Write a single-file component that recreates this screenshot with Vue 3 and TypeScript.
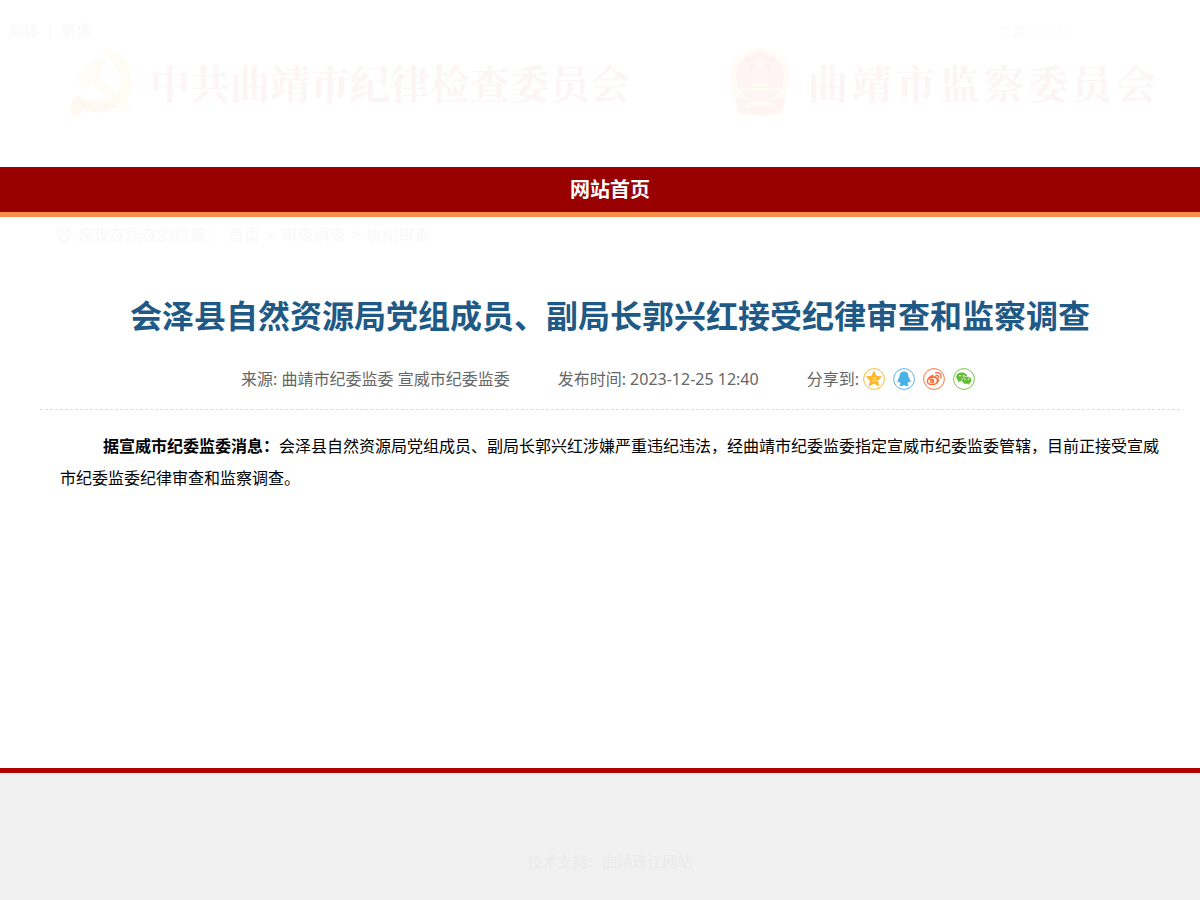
<script setup lang="ts">
const languages = ['简体', '繁体']
const crumbs = ['首页', '审查调查', '执纪审查']
</script>

<template>
  <div class="page">
    <header class="header">
      <div class="tools">
        <nav class="lang">
          <template v-for="(name, i) in languages" :key="name">
            <span v-if="i" class="bar">|</span>
            <a href="#">{{ name }}</a>
          </template>
        </nav>
        <form class="search" @submit.prevent>
          <input type="text" aria-label="站内搜索" placeholder="主题词搜索" />
        </form>
      </div>
      <div class="brands">
        <div class="brand">
          <svg class="emblem" viewBox="0 0 64 70" aria-hidden="true">
            <g fill="#fffcf5">
              <path d="M27 1Q60 3 62 34Q62 47 55 54L60 60L54 66L47 60Q33 69 14 63L7 69L0 66L2 52L9 48Q24 58 39 52L23 37L15 43L5 33L24 13H38L31 22L29 31L46 46Q58 22 27 1Z" />
            </g>
            <path d="M2 53L9 49Q24 61 44 55L47 60Q33 69 14 63L7 69L0 66Z" fill="#fef8f2" />
          </svg>
          <span class="name party">中共曲靖市纪律检查委员会</span>
        </div>
        <div class="brand">
          <svg class="emblem" viewBox="0 0 64 70" aria-hidden="true">
            <circle cx="32" cy="31" r="30" fill="#fffbf5" />
            <circle cx="32" cy="30" r="24" fill="#fef4f3" />
            <path d="M7 49Q32 60 57 49L54 66Q32 71 10 66Z" fill="#fef5f3" />
            <path d="M13 41H51V44H13ZM22 36H42V40H22ZM25 32H39V35H25ZM15 58Q32 50 49 58L46 62Q32 55 18 62Z" fill="#fffaf3" />
            <path d="M32 10l2 5h5l-4 3 2 5-5-3-5 3 2-5-4-3h5z" fill="#fffaf3" />
            <g fill="#fffaf3"><circle cx="19" cy="24" r="2" /><circle cx="24" cy="28" r="2" /><circle cx="40" cy="28" r="2" /><circle cx="45" cy="24" r="2" /></g>
          </svg>
          <span class="name commission">曲靖市监察委员会</span>
        </div>
      </div>
    </header>

    <nav class="nav"><a href="#">网站首页</a></nav>

    <main class="main">
      <nav class="crumbs">
        <svg viewBox="0 0 16 16" aria-hidden="true"><path d="M8 15Q2 10 2 6A6 5 0 0 1 14 6Q14 10 8 15Z" fill="none" stroke="#f9f9f9" stroke-width="2" /><circle cx="8" cy="6" r="2" fill="#f9f9f9" /></svg>
        <span>您现在所在的位置：</span>
        <template v-for="(c, i) in crumbs" :key="c">
          <span v-if="i">&gt;</span>
          <a href="#">{{ c }}</a>
        </template>
      </nav>

      <article>
        <h1>会泽县自然资源局党组成员、副局长郭兴红接受纪律审查和监察调查</h1>
        <div class="meta">
          <span>来源: 曲靖市纪委监委 宣威市纪委监委</span>
          <span>发布时间: 2023-12-25 12:40</span>
          <div class="share">
            <span>分享到:</span>
            <a href="#" aria-label="QQ空间">
              <svg viewBox="0 0 22 22"><circle cx="11" cy="11" r="10.4" fill="#fff" stroke="#f5be3f" /><path d="M11 3.5l2.2 4.8 5.2.6-3.8 3.6 1 5.2-4.6-2.6-4.6 2.6 1-5.2-3.8-3.6 5.2-.6z" fill="#fdb52a" stroke="#fdb52a" stroke-linejoin="round" /><path d="M8.4 9.8h4.8L9.6 13q3 .5 5.4-.2" fill="none" stroke="#ffe3a0" stroke-width=".8" /></svg>
            </a>
            <a href="#" aria-label="QQ好友">
              <svg viewBox="0 0 22 22"><circle cx="11" cy="11" r="10.4" fill="#fff" stroke="#56b6e7" /><path d="M11 3.6C7.8 3.6 6.4 6 6.5 9Q4.6 11.4 4.4 13.4Q4.4 15 6.2 13.6Q6.7 14.8 7.6 15.7Q5.7 16.7 7 17.7Q9.3 18.3 11 17.2Q12.7 18.3 15 17.7Q16.3 16.7 14.4 15.7Q15.3 14.8 15.8 13.6Q17.6 15 17.6 13.4Q17.4 11.4 15.5 9C15.6 6 14.2 3.6 11 3.6Z" fill="#49b1e6" /></svg>
            </a>
            <a href="#" aria-label="新浪微博">
              <svg viewBox="0 0 22 22"><circle cx="11" cy="11" r="10.4" fill="#fff" stroke="#ff763b" /><path d="M9.4 6.8Q11 6.6 10.7 8.5Q14 7.3 13.9 9.8Q16.9 10.9 15.8 13.4Q13.8 17.2 9.3 17.2Q3.8 16.8 3.6 13.4Q4.2 9.1 9.4 6.8Z" fill="#ff6a32" /><ellipse cx="9.4" cy="13" rx="4.4" ry="2.9" fill="#fff" transform="rotate(-8 9.4 13)" /><circle cx="9" cy="13.1" r="2.3" fill="#ff6a32" /><circle cx="8.4" cy="13.5" r=".7" fill="#fff" /><path d="M12.6 4.8Q18.9 3.9 18 10.1M13 7.4Q16 6.9 15.6 9.6" fill="none" stroke="#ff6a32" stroke-width="1.3" stroke-linecap="round" /></svg>
            </a>
            <a href="#" aria-label="微信">
              <svg viewBox="0 0 22 22"><circle cx="11" cy="11" r="10.4" fill="#fff" stroke="#7bc549" /><path d="M8.8 4.6C5.6 4.6 3.2 6.6 3.2 9.1Q3.2 11.2 5.2 12.5L4.7 14.4L7 13.3L8.8 13.6C12 13.6 14.4 11.6 14.4 9.1C14.4 6.6 12 4.6 8.8 4.6Z" fill="#68bd37" /><path d="M13.7 8.4C10.8 8.4 8.8 10.2 8.8 12.4C8.8 14.7 10.8 16.3 13.7 16.3L15.2 16.1L17.2 17.2L16.8 15.4Q18.8 14.2 18.8 12.3C18.8 10.1 16.6 8.4 13.7 8.4Z" fill="#68bd37" stroke="#fff" stroke-width=".6" /><g fill="#fff"><circle cx="7" cy="7.8" r=".8" /><circle cx="10.6" cy="7.8" r=".8" /><circle cx="12.1" cy="11.2" r=".7" /><circle cx="15.4" cy="11.2" r=".7" /></g></svg>
            </a>
          </div>
        </div>
        <p class="text"><strong>据宣威市纪委监委消息：</strong>会泽县自然资源局党组成员、副局长郭兴红涉嫌严重违纪违法，经曲靖市纪委监委指定宣威市纪委监委管辖，目前正接受宣威市纪委监委纪律审查和监察调查。</p>
      </article>
    </main>

    <footer class="footer">技术支持：<a href="#">曲靖珠江网站</a></footer>
  </div>
</template>

<style>
body { margin: 0; background: #fff; }
</style>

<style scoped>
.page {
  min-height: 100vh;
  display: flex;
  flex-direction: column;
  font-family: "Noto Sans", "Noto Sans CJK SC", sans-serif;
  font-size: 16px;
  color: #000;
}
a { color: inherit; text-decoration: none; }
.header { padding-bottom: 47px; }
.tools {
  display: flex;
  justify-content: space-between;
  align-items: center;
  height: 28px;
  padding: 16px 130px 0 9px;
  color: #f9f9f9;
}
.lang { display: flex; gap: 7px; font-size: 15px; line-height: 28px; }
.search input {
  width: 72px;
  padding: 4px 0 0;
  border: 0;
  outline: 0;
  background: transparent;
  font: inherit;
  font-size: 14px;
  color: #666;
}
.search input::placeholder { color: #fcfcfc; opacity: 1; }
.brands {
  display: flex;
  justify-content: space-between;
  padding: 0 40px 0 70px;
}
.brand { display: flex; align-items: center; gap: 16px; }
.emblem { width: 64px; height: 74px; }
.name {
  font-family: "Noto Serif CJK SC", "Noto Sans CJK SC", serif;
  font-weight: 700;
  font-size: 40px;
  line-height: 76px;
  white-space: nowrap;
  color: #fcf5f5;
}
.commission { letter-spacing: 4px; }
.nav {
  background: #900;
  border-bottom: 5px solid #f68e49;
  padding: 1px 0 0 20px;
  text-align: center;
  font-size: 20px;
  font-weight: 700;
  line-height: 44px;
  color: #fff;
}
.nav { line-height: 44px; }
.main { flex: 1; padding: 0 20px 0 40px; }
.crumbs {
  display: flex;
  align-items: center;
  gap: 6px;
  padding: 0 16px;
  line-height: 36px;
  color: #f9f9f9;
}
.crumbs svg { width: 16px; height: 16px; }
h1 {
  margin: 36px 0 0;
  text-align: center;
  font-size: 32px;
  line-height: 54px;
  color: #1f5a87;
}
.meta {
  display: flex;
  justify-content: center;
  gap: 48px;
  margin-top: 21px;
  padding: 0 4px 15px 0;
  border-bottom: 1px dashed #ddd;
  line-height: 30px;
  color: #666;
}
.share { display: flex; align-items: center; gap: 8px; }
.share > span { margin-right: -4px; }
.share a, .share svg { display: block; width: 22px; height: 22px; }
.text {
  margin: 20px 0 0;
  padding: 0 20px;
  line-height: 32px;
  text-indent: 43px;
}
.footer {
  padding: 76px 0 27px 20px;
  border-top: 5px solid #b10000;
  background: #f1f1f1;
  text-align: center;
  font-size: 15px;
  line-height: 24px;
  color: #ebebeb;
}
</style>
